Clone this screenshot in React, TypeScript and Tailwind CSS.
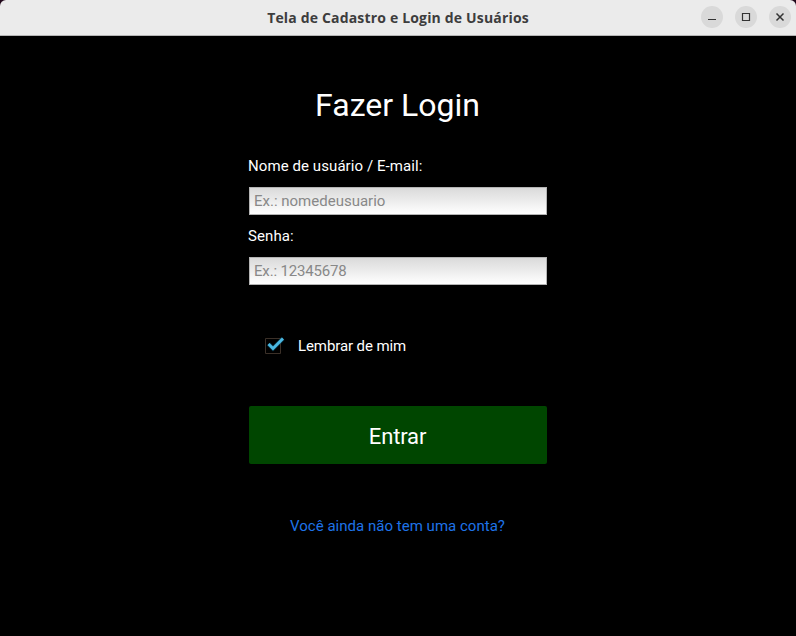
const windowControls = [
  { name: "minimize", d: "M7 13.5h8" },
  { name: "maximize", d: "M7.5 7.5h7v7h-7z" },
  { name: "close", d: "M7.5 7.5l7 7M14.5 7.5l-7 7" },
];

function Field({ label, placeholder, tracking }: { label: string; placeholder: string; tracking: string }) {
  return (
    <label className="flex flex-col gap-[11px]">
      <span className="-ml-px tracking-[0.08px]">{label}</span>
      <input
        placeholder={placeholder}
        className={`h-7 rounded-none border border-[#b4b4b4] bg-linear-to-b from-[#dadada] to-white px-1 text-[#222] outline-none placeholder:text-[#888] ${tracking}`}
      />
    </label>
  );
}

export default function App() {
  return (
    <div className="flex h-[636px] w-[796px] flex-col bg-[#20061a] font-['Roboto',sans-serif] text-[15px] leading-5 text-white">
      <header className="flex h-9 items-center rounded-t-[6px] border-b border-[#b5b5b5] bg-[#ebebeb]">
        <div className="w-[102px]" />
        <h1 className="flex-1 text-center font-['Open_Sans',sans-serif] text-[14px] font-bold tracking-[0.17px] text-[#3d3d3d]">
          Tela de Cadastro e Login de Usuários
        </h1>
        <div className="flex w-[102px] gap-3 pl-[7px]">
          {windowControls.map(({ name, d }) => (
            <svg key={name} className="-mt-px size-[22px] rounded-full bg-[#d9d9d9]" viewBox="0 0 22 22" fill="none" stroke="#333" strokeWidth={name === "close" ? 1.5 : 1.2}>
              <path d={d} />
            </svg>
          ))}
        </div>
      </header>
      <main className="flex flex-1 justify-center bg-black">
        <form className="flex w-[298px] flex-col">
          <h2 className="-ml-px mt-[49px] text-center text-[32px] leading-10">Fazer Login</h2>
          <div className="mt-[31px] flex flex-col gap-[11px]">
            <Field label="Nome de usuário / E-mail:" placeholder="Ex.: nomedeusuario" tracking="tracking-normal" />
            <Field label="Senha:" placeholder="Ex.: 12345678" tracking="tracking-[-0.17px]" />
          </div>
          <div className="mt-[51px] flex h-5 items-center gap-[13px] pl-4">
            <svg width="20" height="20" viewBox="0 0 20 20" fill="none">
              <path d="M.5 2.5h15v15h-15z" stroke="#3b3028" />
              <path d="M3.5 8l4.5 4.5L18 2.5" stroke="#0d5f80" strokeWidth="4.4" opacity=".5" />
              <path d="M3.5 8l4.5 4.5L18 2.5" stroke="#4bb8e2" strokeWidth="2.8" />
            </svg>
            <span className="tracking-[-0.1px]">Lembrar de mim</span>
          </div>
          <button type="button" className="mt-[50px] h-[58px] rounded-[2px] bg-[#004600] pr-px pt-[3px] text-[22px] tracking-[-0.15px]">
            Entrar
          </button>
          <a className="-ml-px mt-[52px] text-center tracking-[0.02px] text-[#1e73e8]">Você ainda não tem uma conta?</a>
        </form>
      </main>
    </div>
  );
}
